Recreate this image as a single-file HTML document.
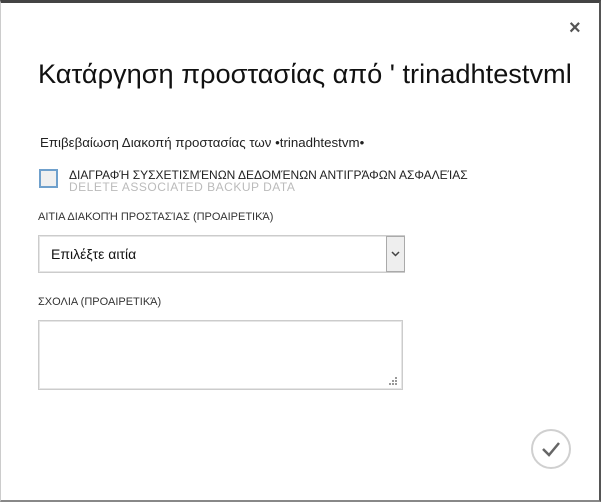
<!DOCTYPE html>
<html><head><meta charset="utf-8"><style>
html,body{margin:0;padding:0;background:#fff;width:603px;height:502px;overflow:hidden;font-family:"Liberation Sans",Arial,sans-serif;color:#000}
.frame{position:absolute;left:0;top:0;width:598px;height:497px;border:2px solid #555;border-top:3px solid #444;border-bottom:2px solid #888;border-left:1px solid #ccc}
.a{position:absolute;white-space:nowrap}
</style></head><body>
<div class="frame"></div>
<div class="a" style="left:569px;top:17px;font-size:20px;color:#555;font-weight:bold">×</div>
<div class="a" style="left:38px;top:58px;font-size:27.2px;color:#111">Κατάργηση προστασίας από ' trinadhtestvml</div>
<div class="a" style="left:40px;top:135px;font-size:13.3px;color:#222">Επιβεβαίωση Διακοπή προστασίας των •trinadhtestvm•</div>
<div class="a" style="left:39px;top:169px;width:15px;height:15px;border:2px solid #6fa0cc;background:#f0f0f0"></div>
<div class="a" style="left:69px;top:180px;font-size:12px;color:#bbb;letter-spacing:0.5px">DELETE ASSOCIATED BACKUP DATA</div>
<div class="a" style="left:69px;top:168px;font-size:12px;color:#222;background:#fff;height:11px;overflow:visible">ΔΙΑΓΡΑΦΉ ΣΥΣΧΕΤΙΣΜΈΝΩΝ ΔΕΔΟΜΈΝΩΝ ΑΝΤΙΓΡΆΦΩΝ ΑΣΦΑΛΕΊΑΣ</div>
<div class="a" style="left:38px;top:211px;font-size:11px;color:#333">ΑΙΤΙΑ ΔΙΑΚΟΠΉ ΠΡΟΣΤΑΣΊΑΣ (ΠΡΟΑΙΡΕΤΙΚΆ)</div>
<div class="a" style="left:38px;top:235px;width:365px;height:36px;border:1px solid #ccc;box-shadow:inset 0 0 0 1px #e6e6e6"></div>
<div class="a" style="left:386px;top:236px;width:19px;height:36px;background:#eee;border:1px solid #aaa;box-sizing:border-box"></div>
<svg class="a" style="left:390px;top:250px" width="11" height="8"><path d="M2 2 L5.5 5.5 L9 2" stroke="#444" stroke-width="1.5" fill="none"/></svg>
<div class="a" style="left:51px;top:246px;font-size:14px;color:#111">Επιλέξτε αιτία</div>
<div class="a" style="left:38px;top:296px;font-size:11px;color:#333">ΣΧΟΛΙΑ (ΠΡΟΑΙΡΕΤΙΚΆ)</div>
<div class="a" style="left:38px;top:320px;width:363px;height:68px;border:1px solid #ccc;box-shadow:inset 0 0 0 1px #e6e6e6"></div>
<svg class="a" style="left:388px;top:376px" width="10" height="10" fill="#999"><rect x="7" y="1" width="2" height="2"/><rect x="4" y="4" width="2" height="2"/><rect x="7" y="4" width="2" height="2"/><rect x="1" y="7" width="2" height="2"/><rect x="4" y="7" width="2" height="2"/><rect x="7" y="7" width="2" height="2"/></svg>
<svg class="a" style="left:530px;top:428px" width="42" height="42"><circle cx="21" cy="21" r="19" fill="#fff" stroke="#d0d0d0" stroke-width="2"/><path d="M13 21 L19 27 L29 15" stroke="#666" stroke-width="2.5" fill="none"/></svg>
</body></html>
